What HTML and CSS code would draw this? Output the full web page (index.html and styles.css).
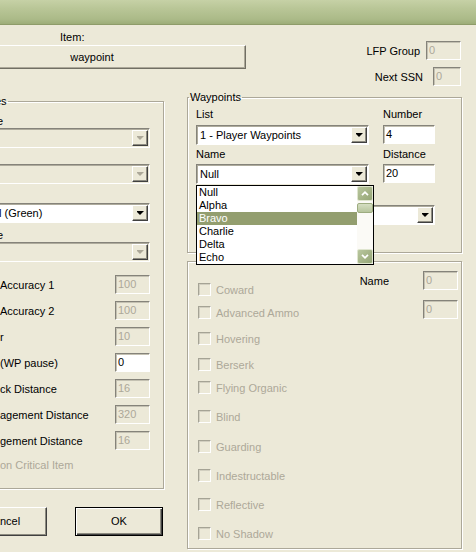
FILE: index.html
```html
<!DOCTYPE html>
<html>
<head>
<meta charset="utf-8">
<title>Waypoint</title>
<link rel="stylesheet" href="styles.css">
</head>
<body>
<div class="window">
  <div class="titlebar"></div>
  <div class="header">
    <div class="item-col">
      <div class="item-label">Item:</div>
      <div class="item-box">waypoint</div>
    </div>
    <div class="lfp-col">
      <div class="hrow"><span>LFP Group</span><div class="edit dis w35">0</div></div>
      <div class="hrow hrow2"><span>Next SSN</span><div class="edit dis w28">0</div></div>
    </div>
  </div>

  <div class="main">
    <div class="left-col">
      <fieldset class="group group-left">
        <legend>es</legend>
        <div class="lg-body">
          <div class="fblock fb1">
            <div class="flabel cut">e</div>
            <div class="combo dis"><span class="ctext"></span><span class="cbtn"></span></div>
          </div>
          <div class="fblock fb2">
            <div class="flabel"></div>
            <div class="combo dis"><span class="ctext"></span><span class="cbtn"></span></div>
          </div>
          <div class="fblock fb3">
            <div class="flabel"></div>
            <div class="combo white"><span class="ctext lead">l (Green)</span><span class="cbtn on"></span></div>
          </div>
          <div class="fblock fb3">
            <div class="flabel cut">e</div>
            <div class="combo dis"><span class="ctext"></span><span class="cbtn"></span></div>
          </div>

          <div class="erow first"><span class="elabel">Accuracy 1</span><div class="edit dis w35">100</div></div>
          <div class="erow"><span class="elabel">Accuracy 2</span><div class="edit dis w35">100</div></div>
          <div class="erow"><span class="elabel">r</span><div class="edit dis w35">10</div></div>
          <div class="erow"><span class="elabel">(WP pause)</span><div class="edit w35">0</div></div>
          <div class="erow"><span class="elabel">ck Distance</span><div class="edit dis w35">16</div></div>
          <div class="erow"><span class="elabel">agement Distance</span><div class="edit dis w35">320</div></div>
          <div class="erow"><span class="elabel">gement Distance</span><div class="edit dis w35">16</div></div>
          <div class="crit">on Critical Item</div>
        </div>
      </fieldset>
      <div class="btn-row">
        <div class="btn">Cancel</div>
        <div class="btn default">OK</div>
      </div>
    </div>

    <div class="right-col">
      <fieldset class="group group-wp">
        <legend>Waypoints</legend>
        <div class="wp-body">
          <div class="wp-grid">
            <div class="wlabel wl1">List</div>
            <div class="wlabel wl1">Number</div>
            <div class="combo white"><span class="ctext">1 - Player Waypoints</span><span class="cbtn on"></span></div>
            <div class="edit">4</div>
            <div class="wlabel wl2">Name</div>
            <div class="wlabel wl2">Distance</div>
            <div class="name-wrap">
              <div class="combo white"><span class="ctext">Null</span><span class="cbtn on"></span></div>
              <div class="dropdown">
                <div class="dd-items">
                  <div class="dd-item">Null</div>
                  <div class="dd-item">Alpha</div>
                  <div class="dd-item sel">Bravo</div>
                  <div class="dd-item">Charlie</div>
                  <div class="dd-item">Delta</div>
                  <div class="dd-item">Echo</div>
                </div>
                <div class="dd-scroll">
                  <div class="sb-btn"><svg width="8" height="5" viewBox="0 0 8 5"><path d="M1 4.2 L4 1.2 L7 4.2" fill="none" stroke="#fff" stroke-width="1.7"/></svg></div>
                  <div class="sb-thumb"></div>
                  <div class="sb-track"></div>
                  <div class="sb-btn"><svg width="8" height="5" viewBox="0 0 8 5"><path d="M1 0.8 L4 3.8 L7 0.8" fill="none" stroke="#fff" stroke-width="1.7"/></svg></div>
                </div>
              </div>
            </div>
            <div class="edit">20</div>
            <div class="combo white wide"><span class="ctext"></span><span class="cbtn on"></span></div>
          </div>
        </div>
      </fieldset>

      <fieldset class="group group-flags">
        <div class="flags-body">
          <div class="cb-list">
            <div class="cb m21"><span class="box"></span><span>Coward</span></div>
            <div class="cb m10"><span class="box"></span><span>Advanced Ammo</span></div>
            <div class="cb m13"><span class="box"></span><span>Hovering</span></div>
            <div class="cb m13"><span class="box"></span><span>Berserk</span></div>
            <div class="cb m10"><span class="box"></span><span>Flying Organic</span></div>
            <div class="cb m16"><span class="box"></span><span>Blind</span></div>
            <div class="cb m17"><span class="box"></span><span>Guarding</span></div>
            <div class="cb m16"><span class="box"></span><span>Indestructable</span></div>
            <div class="cb m16"><span class="box"></span><span>Reflective</span></div>
            <div class="cb m16"><span class="box"></span><span>No Shadow</span></div>
          </div>
          <div class="name-side">
            <span class="nlabel">Name</span>
            <div class="edit dis w35">0</div>
            <span></span>
            <div class="edit dis w35">0</div>
          </div>
        </div>
      </fieldset>
    </div>
  </div>
</div>
</body>
</html>
```

FILE: styles.css
```css
* { box-sizing: border-box; }

html, body {
  margin: 0;
  padding: 0;
}

body {
  background: #ECE9D8;
  font-family: "Liberation Sans", Arial, sans-serif;
  font-size: 11px;
  color: #000;
}

.window {
  width: 476px;
  height: 552px;
  overflow: hidden;
  background: #ECE9D8;
}

.titlebar {
  height: 25px;
  background: linear-gradient(180deg, #c6d1a6 0%, #b9c697 35%, #abba88 80%, #9dad78 100%);
  border-bottom: 1px solid #8e9c69;
}

/* header */
.header {
  display: flex;
  height: 65px;
}

.item-col {
  margin-left: -62px;
  width: 308px;
  flex: none;
  padding-top: 6px;
}

.item-label {
  line-height: 13px;
  padding-left: 122px;
}

.item-box {
  margin-top: 1px;
  height: 24px;
  line-height: 22px;
  text-align: center;
  border: 1px solid;
  border-color: #fff #716f64 #716f64 #fff;
  box-shadow: inset -1px -1px 0 #aca899;
}

.lfp-col {
  flex: 1;
  display: flex;
  flex-direction: column;
  align-items: flex-end;
  padding: 16px 15px 0 0;
}

.hrow {
  display: flex;
  align-items: center;
  height: 19px;
  gap: 6px;
}

.hrow2 {
  margin-top: 7px;
  gap: 10px;
}

/* edits */
.edit {
  height: 19px;
  border: 1px solid;
  border-color: #85837a #fff #fff #85837a;
  box-shadow: inset 1px 1px 0 #c4c1b2;
  background: #fff;
  padding-left: 2px;
  line-height: 17px;
  white-space: nowrap;
  overflow: hidden;
}

.edit.dis {
  background: #ECE9D8;
  color: #aca899;
}

.w35 { width: 35px; }
.w28 { width: 28px; }

/* combos */
.combo {
  display: flex;
  height: 20px;
  border: 1px solid;
  border-color: #85837a #fff #fff #85837a;
  padding: 1px;
  box-shadow: inset 1px 1px 0 #aeab9c;
}

.combo.white { background: #fff; }
.combo.dis { background: #ECE9D8; }

.ctext {
  flex: 1;
  line-height: 16px;
  padding-left: 2px;
  white-space: nowrap;
  overflow: hidden;
}

.ctext.lead { padding-left: 3px; }

.cbtn {
  width: 16px;
  height: 16px;
  flex: none;
  background: #ECE9D8;
  border: 1px solid;
  border-color: #fff #404040 #404040 #fff;
  box-shadow: inset -1px -1px 0 #8d8b80;
  display: flex;
  align-items: center;
  justify-content: center;
}

.cbtn::after {
  content: "";
  width: 7px;
  height: 4px;
  background: #aca899;
  clip-path: polygon(0 0, 7px 0, 7px 1px, 6px 1px, 6px 2px, 5px 2px, 5px 3px, 4px 3px, 4px 4px, 3px 4px, 3px 3px, 2px 3px, 2px 2px, 1px 2px, 1px 1px, 0 1px);
}

.cbtn.on::after { background: #000; }

/* group boxes */
fieldset.group {
  margin: 0;
  padding: 0;
  min-width: 0;
  border: 1px solid #aca899;
  box-shadow: 1px 1px 0 #fff, inset 1px 1px 0 #fff;
}

fieldset.group legend {
  padding: 0 1px;
  line-height: 14px;
  font-size: 11px;
}

.main {
  display: flex;
  align-items: flex-start;
  gap: 23px;
  margin-left: -20px;
}

.left-col {
  width: 184px;
  flex: none;
  display: flex;
  flex-direction: column;
}

.right-col {
  width: 275px;
  flex: none;
  display: flex;
  flex-direction: column;
}

fieldset.group-left {
  margin-top: 4px;
}

fieldset.group-left legend { margin-left: 13px; }

.lg-body {
  padding: 0 13px 16px 13px;
}

.fblock { display: flex; flex-direction: column; }
.fb1 { margin-top: 7px; }
.fb2 { margin-top: 3px; }
.fb3 { margin-top: 6px; }

.flabel {
  height: 13px;
  line-height: 13px;
  white-space: nowrap;
}

.flabel.cut { padding-left: 3px; }

.erow {
  display: flex;
  justify-content: space-between;
  align-items: center;
  height: 19px;
  margin-top: 7px;
}

.erow.first { margin-top: 13px; }

.elabel {
  padding-left: 6px;
  white-space: nowrap;
}

.crit {
  margin-top: 9px;
  height: 13px;
  line-height: 13px;
  padding-left: 6px;
  color: #aca899;
  white-space: nowrap;
}

.btn-row {
  display: flex;
  justify-content: flex-end;
  gap: 28px;
  margin-top: 18px;
  padding-right: 1px;
}

.btn {
  width: 88px;
  height: 29px;
  flex: none;
  line-height: 27px;
  text-align: center;
  background: #ECE9D8;
  border: 1px solid;
  border-color: #fff #404040 #404040 #fff;
  box-shadow: inset -1px -1px 0 #8d8b80;
}

.btn.default {
  border: 1px solid #000;
  box-shadow: inset 1px 1px 0 #fff, inset -1px -1px 0 #404040, inset -2px -2px 0 #8d8b80;
}

/* waypoints group */
fieldset.group-wp legend { margin-left: 1px; }

.wp-body {
  padding: 0 26px 27px 8px;
}

.wp-grid {
  display: grid;
  grid-template-columns: 173px 52px;
  column-gap: 14px;
}

.wlabel {
  line-height: 13px;
  white-space: nowrap;
}

.wl1 { padding: 4px 0 4px; }
.wl2 { padding: 3px 0 3px; }

.combo.wide {
  grid-column: 1 / -1;
  margin-top: 21px;
}

.name-wrap { position: relative; }

.dropdown {
  position: absolute;
  left: 0;
  top: 21px;
  width: 178px;
  height: 80px;
  border: 1px solid #000;
  background: #fff;
  display: flex;
  z-index: 2;
}

.dd-items {
  flex: 1;
  overflow: hidden;
}

.dd-item {
  height: 13px;
  line-height: 13px;
  padding-left: 2px;
  white-space: nowrap;
}

.dd-item.sel {
  background: #939e6f;
  color: #fff;
}

.dd-scroll {
  width: 16px;
  flex: none;
  display: flex;
  flex-direction: column;
  background: #fbfaf6;
}

.sb-btn {
  height: 15px;
  flex: none;
  border: 1px solid #dfe5cf;
  border-radius: 2px;
  background: linear-gradient(135deg, #b9c79f 0%, #a3b285 60%, #95a676 100%);
  display: flex;
  align-items: center;
  justify-content: center;
}

.sb-thumb {
  height: 10px;
  flex: none;
  margin-top: 2px;
  border: 1px solid #9dac80;
  border-radius: 2px;
  background: linear-gradient(180deg, #d5dec2, #b7c59d);
}

.sb-track { flex: 1; }

/* flags group */
fieldset.group-flags {
  margin-top: 8px;
}

.flags-body {
  display: flex;
  padding: 0 3px 8px 10px;
}

.cb-list {
  display: flex;
  flex-direction: column;
}

.cb {
  display: flex;
  align-items: center;
  gap: 5px;
  height: 13px;
  color: #aca899;
  white-space: nowrap;
}

.box {
  width: 13px;
  height: 13px;
  flex: none;
  border: 1px solid;
  border-color: #a5a395 #fff #fff #a5a395;
  box-shadow: inset 1px 1px 0 #d2cfc0;
}

.m10 { margin-top: 10px; }
.m13 { margin-top: 13px; }
.m16 { margin-top: 16px; }
.m17 { margin-top: 17px; }
.m21 { margin-top: 21px; }

.name-side {
  margin-left: auto;
  padding-top: 9px;
  display: grid;
  grid-template-columns: auto 35px;
  column-gap: 34px;
  row-gap: 10px;
  align-items: center;
  align-self: flex-start;
}
```
